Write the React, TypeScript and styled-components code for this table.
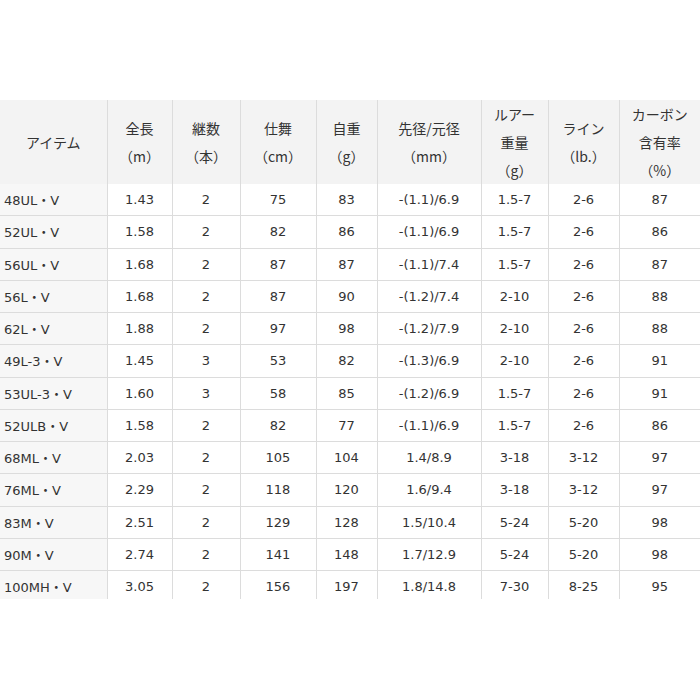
import styled, { createGlobalStyle } from 'styled-components'

const GlobalStyle = createGlobalStyle`
  html, body {
    margin: 0;
    padding: 0;
    background: #ffffff;
  }
`

const Page = styled.div`
  width: 700px;
  height: 700px;
  padding-top: 100px;
  box-sizing: border-box;
  background: #fff;
`

const Clip = styled.div`
  width: 700px;
  height: 499px;
  overflow: hidden;
`

const Table = styled.table`
  width: 700px;
  border-collapse: collapse;
  table-layout: fixed;
  font-family: 'DejaVu Sans', 'Noto Sans CJK JP', sans-serif;
  font-size: 13px;
  color: #333;
`

const Row = styled.tr`
  & + & {
    border-top: 1px solid #dcdcdc;
  }
`

const Head = styled.th`
  background: #f3f3f3;
  font-weight: normal;
  height: 84px;
  padding: 0;
  text-align: center;
  vertical-align: middle;
  line-height: 28px;
  font-size: 14px;
  font-family: 'Noto Sans CJK JP', 'DejaVu Sans', sans-serif;
  & + & {
    border-left: 1px solid #dcdcdc;
  }
`

const Cell = styled.td<{ $label?: boolean }>`
  height: 31.25px;
  padding: 0 0 0 ${(p) => (p.$label ? '4px' : '0')};
  text-align: ${(p) => (p.$label ? 'left' : 'center')};
  background: ${(p) => (p.$label ? '#f7f7f7' : '#fff')};
  white-space: nowrap;
  & + & {
    border-left: 1px solid #dcdcdc;
  }
`

const Dot = styled.span`
  font-family: 'Noto Sans CJK JP', sans-serif;
`

const widths = [107, 65, 68, 76, 61, 104, 67, 71, 81]

const headers: string[][] = [
  ['アイテム'],
  ['全長', '（m）'],
  ['継数', '（本）'],
  ['仕舞', '（cm）'],
  ['自重', '（g）'],
  ['先径/元径', '（mm）'],
  ['ルアー', '重量', '（g）'],
  ['ライン', '（lb.）'],
  ['カーボン', '含有率', '（%）'],
]

const rows: string[][] = [
  ['48UL・V', '1.43', '2', '75', '83', '-(1.1)/6.9', '1.5-7', '2-6', '87'],
  ['52UL・V', '1.58', '2', '82', '86', '-(1.1)/6.9', '1.5-7', '2-6', '86'],
  ['56UL・V', '1.68', '2', '87', '87', '-(1.1)/7.4', '1.5-7', '2-6', '87'],
  ['56L・V', '1.68', '2', '87', '90', '-(1.2)/7.4', '2-10', '2-6', '88'],
  ['62L・V', '1.88', '2', '97', '98', '-(1.2)/7.9', '2-10', '2-6', '88'],
  ['49L-3・V', '1.45', '3', '53', '82', '-(1.3)/6.9', '2-10', '2-6', '91'],
  ['53UL-3・V', '1.60', '3', '58', '85', '-(1.2)/6.9', '1.5-7', '2-6', '91'],
  ['52ULB・V', '1.58', '2', '82', '77', '-(1.1)/6.9', '1.5-7', '2-6', '86'],
  ['68ML・V', '2.03', '2', '105', '104', '1.4/8.9', '3-18', '3-12', '97'],
  ['76ML・V', '2.29', '2', '118', '120', '1.6/9.4', '3-18', '3-12', '97'],
  ['83M・V', '2.51', '2', '129', '128', '1.5/10.4', '5-24', '5-20', '98'],
  ['90M・V', '2.74', '2', '141', '148', '1.7/12.9', '5-24', '5-20', '98'],
  ['100MH・V', '3.05', '2', '156', '197', '1.8/14.8', '7-30', '8-25', '95'],
]

function Label({ text }: { text: string }) {
  const [a, b] = text.split('・')
  return (
    <>
      {a}
      <Dot>・</Dot>
      {b}
    </>
  )
}

export default function App() {
  return (
    <Page>
      <GlobalStyle />
      <Clip>
        <Table>
          <colgroup>
            {widths.map((w, i) => (
              <col key={i} style={{ width: w }} />
            ))}
          </colgroup>
          <thead>
            <Row>
              {headers.map((lines, i) => (
                <Head key={i}>
                  {lines.map((l, j) => (
                    <div key={j}>{l}</div>
                  ))}
                </Head>
              ))}
            </Row>
          </thead>
          <tbody>
            {rows.map((r, i) => (
              <Row key={i}>
                {r.map((v, j) => (
                  <Cell key={j} $label={j === 0}>
                    {j === 0 ? <Label text={v} /> : v}
                  </Cell>
                ))}
              </Row>
            ))}
          </tbody>
        </Table>
      </Clip>
    </Page>
  )
}
